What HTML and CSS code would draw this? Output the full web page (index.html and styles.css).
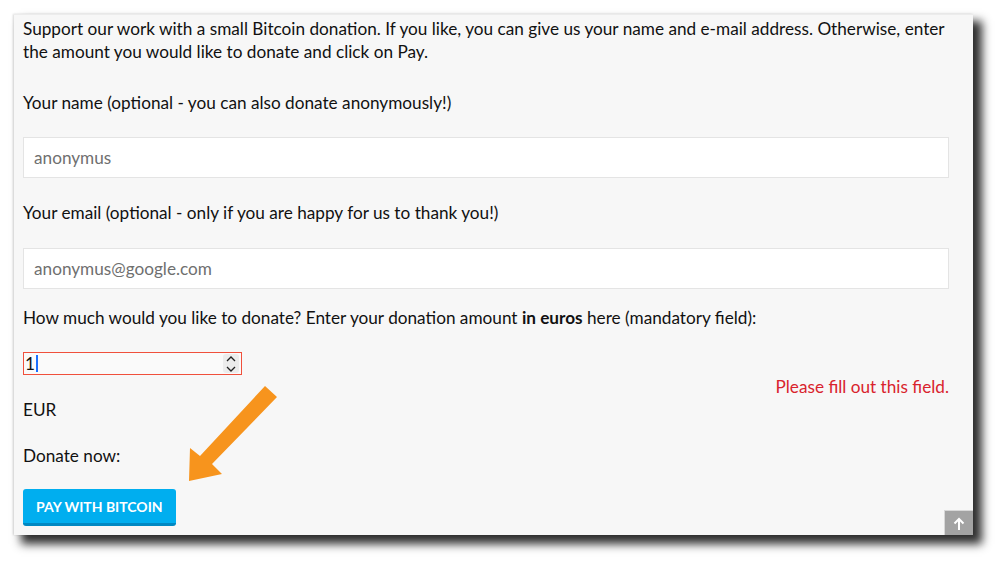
FILE: index.html
```html
<!DOCTYPE html>
<html lang="en">
<head>
    <meta charset="UTF-8">
    <title>Bitcoin Donation</title>
    <link rel="stylesheet" href="styles.css">
</head>
<body>
    <div class="panel">
        <p class="intro">Support our work with a small Bitcoin donation. If you like, you can give us your name and e-mail address. Otherwise, enter the amount you would like to donate and click on Pay.</p>

        <label class="field-label" for="name">Your name (optional - you can also donate anonymously!)</label>
        <input class="text-field" id="name" type="text" placeholder="anonymus">

        <label class="field-label email-label" for="email">Your email (optional - only if you are happy for us to thank you!)</label>
        <input class="text-field" id="email" type="text" placeholder="anonymus@google.com">

        <label class="field-label amount-label">How much would you like to donate? Enter your donation amount <strong>in euros</strong> here (mandatory field):</label>
        <div class="amount">
            <span class="amount-value">1</span><span class="caret"></span>
            <span class="spinner">
                <svg width="12" height="20" viewBox="0 0 12 20">
                    <path d="M2 7 L6 3 L10 7" fill="none" stroke="#222" stroke-width="1.3"/>
                    <path d="M2 13 L6 17 L10 13" fill="none" stroke="#222" stroke-width="1.3"/>
                </svg>
            </span>
        </div>
        <div class="error">Please fill out this field.</div>
        <div class="currency">EUR</div>

        <div class="donate-label">Donate now:</div>
        <button class="pay-button">Pay with Bitcoin</button>

        <svg class="pointer" width="100" height="110" viewBox="0 0 100 110">
            <polygon points="85,5 97,16 32,83 42,93 9,100 10,67 20,75" fill="#f7941d"/>
        </svg>

        <a class="to-top" href="#">
            <svg width="12" height="14" viewBox="0 0 12 14">
                <path d="M6 13 V2 M1.5 6.5 L6 2 L10.5 6.5" fill="none" stroke="#fff" stroke-width="2"/>
            </svg>
        </a>
    </div>
</body>
</html>
```

FILE: styles.css
```css
body {
    margin: 0;
    height: 567px;
    box-sizing: border-box;
    padding: 14px 0 0 14px;
    background: #fff;
    font-family: Lato, "Liberation Sans", sans-serif;
    font-size: 17.2px;
    color: #111;
}

.panel {
    position: relative;
    width: 959px;
    box-sizing: border-box;
    padding: 2px 24px 9px 9px;
    background: #f7f7f7;
    border-top: 1px solid #ececec;
    box-shadow: 8px 8px 9px 1px rgba(0,0,0,0.82), -1px 0 2px rgba(0,0,0,0.15);
    line-height: 23px;
}

.intro {
    margin: 0 0 28px;
}

.field-label {
    display: block;
    margin-bottom: 23px;
}

.email-label {
    margin-top: 23px;
}

.amount-label {
    margin-top: 17px;
}

.text-field {
    display: block;
    width: 100%;
    height: 41px;
    box-sizing: border-box;
    margin: 0;
    padding: 0 10px;
    border: 1px solid #e4e4e4;
    background: #fff;
    font-family: inherit;
    font-size: 17.2px;
    color: #333;
}

.text-field::placeholder {
    color: #6f6f6f;
}

#email {
    margin-top: 24px;
}

.amount {
    display: flex;
    align-items: center;
    width: 219px;
    height: 23px;
    box-sizing: border-box;
    border: 1px solid #f0503c;
    background: #fafafa;
    padding-left: 1px;
}

.amount-value {
    line-height: 21px;
}

.caret {
    width: 2px;
    height: 17px;
    background: #1a6fff;
    margin-left: 1px;
}

.spinner {
    margin-left: auto;
    margin-right: 2px;
    width: 16px;
    height: 19px;
    display: flex;
    align-items: center;
    justify-content: center;
    background: #ececec;
    border-radius: 3px;
}

.error {
    text-align: right;
    color: #d9232d;
}

.donate-label {
    margin-top: 23px;
}

.pay-button {
    display: block;
    margin-top: 22px;
    height: 37px;
    padding: 0 13px;
    border: none;
    border-bottom: 3px solid #0088c2;
    border-radius: 3px;
    background: #00aeef;
    color: #fff;
    font-family: inherit;
    font-size: 14px;
    font-weight: bold;
    text-transform: uppercase;
    cursor: pointer;
}

.pointer {
    position: absolute;
    left: 166px;
    top: 366px;
}

.to-top {
    position: absolute;
    right: 0;
    bottom: 0;
    width: 29px;
    height: 25px;
    box-sizing: border-box;
    display: flex;
    align-items: flex-end;
    justify-content: center;
    padding-bottom: 4px;
    background: #a3a3a3;
    border-left: 1px solid #d8d8d8;
    border-top: 1px solid #d8d8d8;
}
```
